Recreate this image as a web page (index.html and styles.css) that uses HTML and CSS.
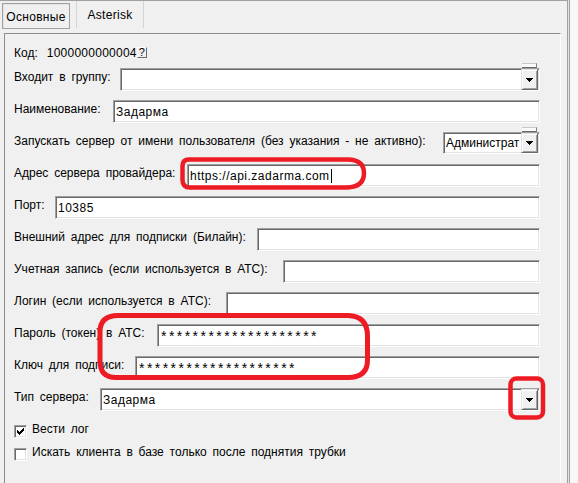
FILE: index.html
```html
<!DOCTYPE html>
<html lang="ru">
<head>
<meta charset="utf-8">
<title>Сервер</title>
<link rel="stylesheet" href="styles.css">
</head>
<body>
<div class="window">
  <div class="tabctl">
    <div class="tabs">
      <div class="tab active">Основные</div>
      <div class="tab">Asterisk</div>
    </div>
    <div class="panel">
      <div class="row code">
        <span class="lbl">Код:</span>
        <span class="codeval">1000000000004</span>
        <span class="qbtn">?</span>
      </div>
      <div class="row">
        <span class="lbl w-group">Входит в группу:</span>
        <div class="field combo stub"><span class="cval"></span><span class="ddbtn"><svg width="7" height="4" viewBox="0 0 7 4"><path d="M0 0h7v1H0zM1 1h5v1H1zM2 2h3v1H2zM3 3h1v1H3z"/></svg></span></div>
      </div>
      <div class="row">
        <span class="lbl w-name">Наименование:</span>
        <div class="field">Задарма</div>
      </div>
      <div class="row">
        <span class="lbl w-run">Запускать сервер от имени пользователя (без указания - не активно):</span>
        <div class="field combo stub small"><span class="cval">Администрат</span><span class="ddbtn"><svg width="7" height="4" viewBox="0 0 7 4"><path d="M0 0h7v1H0zM1 1h5v1H1zM2 2h3v1H2zM3 3h1v1H3z"/></svg></span></div>
      </div>
      <div class="row">
        <span class="lbl w-addr">Адрес сервера провайдера:</span>
        <div class="field">https://api.zadarma.com<span class="caret"></span></div>
      </div>
      <div class="row">
        <span class="lbl w-port">Порт:</span>
        <div class="field">10385</div>
      </div>
      <div class="row">
        <span class="lbl w-ext">Внешний адрес для подписки (Билайн):</span>
        <div class="field"></div>
      </div>
      <div class="row">
        <span class="lbl w-acc">Учетная запись (если используется в АТС):</span>
        <div class="field"></div>
      </div>
      <div class="row">
        <span class="lbl w-login">Логин (если используется в АТС):</span>
        <div class="field"></div>
      </div>
      <div class="row">
        <span class="lbl w-pass">Пароль (токен) в АТС:</span>
        <div class="field pwd">********************</div>
      </div>
      <div class="row">
        <span class="lbl w-key">Ключ для подписи:</span>
        <div class="field pwd">********************</div>
      </div>
      <div class="row">
        <span class="lbl w-type">Тип сервера:</span>
        <div class="field combo"><span class="cval">Задарма</span><span class="ddbtn"><svg width="7" height="4" viewBox="0 0 7 4"><path d="M0 0h7v1H0zM1 1h5v1H1zM2 2h3v1H2zM3 3h1v1H3z"/></svg></span></div>
      </div>
      <div class="check first">
        <span class="box"><svg width="7" height="7" viewBox="0 0 7 7"><path d="M0 2h1v3H0zM1 3h1v3H1zM2 4h1v3H2zM3 3h1v3H3zM4 2h1v3H4zM5 1h1v3H5zM6 0h1v3H6z"/></svg></span>
        <span class="ctext">Вести лог</span>
      </div>
      <div class="check">
        <span class="box"></span>
        <span class="ctext">Искать клиента в базе только после поднятия трубки</span>
      </div>
    </div>
  </div>
  <div class="edge"></div>
  <div class="rest"></div>
  <svg class="marks" width="578" height="483" viewBox="0 0 578 483">
    <path d="M189 159.5 L348 159.5 Q364 160 364 173 Q364 187 347 187.5 L190 187.5 Q182.5 187.5 182.5 180 L182.5 166 Q182.5 159.5 189 159.5 Z"/>
    <path d="M118 315.5 L348 315.5 Q367.5 316 367.5 336 L367.5 360 Q367.5 377.5 348 377.5 L116 377.5 Q100 377.5 100 361 L100 332 Q100 315.5 118 315.5 Z" class="thick"/>
    <rect x="510.5" y="378.5" width="32.5" height="39" rx="6" ry="6"/>
  </svg>
</div>
</body>
</html>
```

FILE: styles.css
```css
html, body {
  margin: 0;
  padding: 0;
  background: #f0f0f0;
}

body {
  font-family: "Liberation Sans", Arial, sans-serif;
  font-size: 12px;
  word-spacing: 2.5px;
  color: #000;
}

.window {
  position: relative;
  display: flex;
  width: 578px;
  height: 483px;
  overflow: hidden;
  background: #f0f0f0;
}

.tabctl {
  width: 567px;
  flex: none;
  display: flex;
  flex-direction: column;
  box-sizing: border-box;
  border-top: 1px solid #a0a0a0;
}

.tabs {
  height: 32px;
  flex: none;
  display: flex;
  align-items: flex-start;
  padding-left: 2px;
}

.tab {
  width: 68px;
  height: 27px;
  box-sizing: border-box;
  margin-left: 6px;
  display: flex;
  align-items: center;
  justify-content: center;
  line-height: 14px;
  letter-spacing: 0.3px;
  border-left: 1px solid #d4d4d4;
  border-right: 1px solid #d4d4d4;
}

.tab.active {
  margin-left: 0;
  margin-top: 2px;
  height: 26px;
  border: 1px solid #a0a0a0;
  box-shadow: inset 1px 1px 0 #e3e3e3;
  padding-top: 1px;
}

.panel {
  flex: 1;
  width: 557px;
  margin-left: 4px;
  box-sizing: border-box;
  border-top: 1px solid #8c8c8c;
  border-left: 1px solid #8c8c8c;
  border-right: 1px solid #fcfcfc;
  padding: 12px 20px 0 9px;
  display: flex;
  flex-direction: column;
}

.row {
  display: flex;
  align-items: flex-start;
  height: 23px;
  margin-top: 9px;
  flex: none;
}

.row.code {
  height: 13px;
  margin-top: 0;
}

.lbl {
  flex: none;
  white-space: nowrap;
  line-height: 14px;
  padding-top: 2px;
}

.code .lbl {
  padding-top: 0;
}

/* label widths: the field of each row starts where the form puts it */
.w-group { width: 106px; }
.w-name { width: 99px; }
.w-run { width: 429px; }
.w-addr { width: 173px; }
.w-port { width: 41px; }
.w-ext { width: 243px; }
.w-acc { width: 269px; }
.w-login { width: 212px; }
.w-pass { width: 143px; }
.w-key { width: 121px; }
.w-type { width: 86px; }

.codeval {
  margin-left: 9px;
  line-height: 14px;
  letter-spacing: 0.25px;
}

.qbtn {
  width: 10px;
  height: 11px;
  margin-top: 1px;
  box-sizing: border-box;
  background: #f0f0f0;
  border: 1px solid;
  border-color: #fff #696969 #696969 #fff;
  font-size: 11px;
  line-height: 9px;
  text-align: center;
  overflow: hidden;
}

.field {
  position: relative;
  flex: 1;
  min-width: 0;
  height: 23px;
  box-sizing: border-box;
  background: #fff;
  border: 1px solid;
  border-color: #a0a0a0 #fff #fff #a0a0a0;
  box-shadow: inset 1px 1px 0 #696969, inset -1px -1px 0 #e3e3e3;
  display: flex;
  align-items: center;
  padding-left: 2px;
  line-height: 14px;
  white-space: nowrap;
  word-spacing: 0;
  letter-spacing: 0.5px;
}

.pwd {
  font-size: 14px;
  letter-spacing: 2.45px;
  padding-left: 3px;
}

.caret {
  display: inline-block;
  width: 1px;
  height: 14px;
  background: #000;
  margin-left: 1px;
}

.combo.small {
  flex: none;
  width: 97px;
  height: 22px;
  letter-spacing: 0;
}

.cval {
  flex: 1;
  min-width: 0;
  overflow: hidden;
  white-space: nowrap;
}

.ddbtn {
  flex: none;
  align-self: stretch;
  width: 17px;
  margin: 0 1px;
  box-sizing: border-box;
  background: #f0f0f0;
  border: 1px solid;
  border-color: #e3e3e3 #696969 #696969 #e3e3e3;
  box-shadow: inset 1px 1px 0 #fff, inset -1px -1px 0 #a0a0a0;
  display: flex;
  align-items: center;
  justify-content: center;
}

.ddbtn svg {
  display: block;
  shape-rendering: crispEdges;
}

.stub::before {
  content: "";
  position: absolute;
  top: -6px;
  right: 2px;
  width: 14px;
  height: 3px;
  background: #fafafa;
  border-top: 1px solid #c8c8c8;
  border-right: 1px solid #808080;
  border-bottom: 1px solid #696969;
}

.check {
  display: flex;
  align-items: flex-start;
  height: 14px;
  margin-top: 9px;
  flex: none;
}

.check.first {
  margin-top: 12px;
}

.box {
  width: 13px;
  height: 13px;
  margin-top: 2px;
  flex: none;
  box-sizing: border-box;
  background: #fff;
  border: 1px solid;
  border-color: #a0a0a0 #fff #fff #a0a0a0;
  box-shadow: inset 1px 1px 0 #696969, inset -1px -1px 0 #e3e3e3;
  display: flex;
  align-items: center;
  justify-content: center;
}

.box svg {
  display: block;
  shape-rendering: crispEdges;
}

.ctext {
  margin-left: 5px;
  line-height: 13px;
  white-space: nowrap;
}

.edge {
  flex: none;
  width: 3px;
  box-sizing: border-box;
  border-left: 1px solid #a0a0a0;
  border-right: 1px solid #a0a0a0;
  background: #e3e3e3;
}

.rest {
  flex: 1;
  background: #f7f7f7;
}

.marks {
  position: absolute;
  left: 0;
  top: 0;
  pointer-events: none;
}

.marks path,
.marks rect {
  fill: none;
  stroke: #ed1c24;
  stroke-width: 4.5;
}

.marks .thick {
  stroke-width: 5;
}
```
